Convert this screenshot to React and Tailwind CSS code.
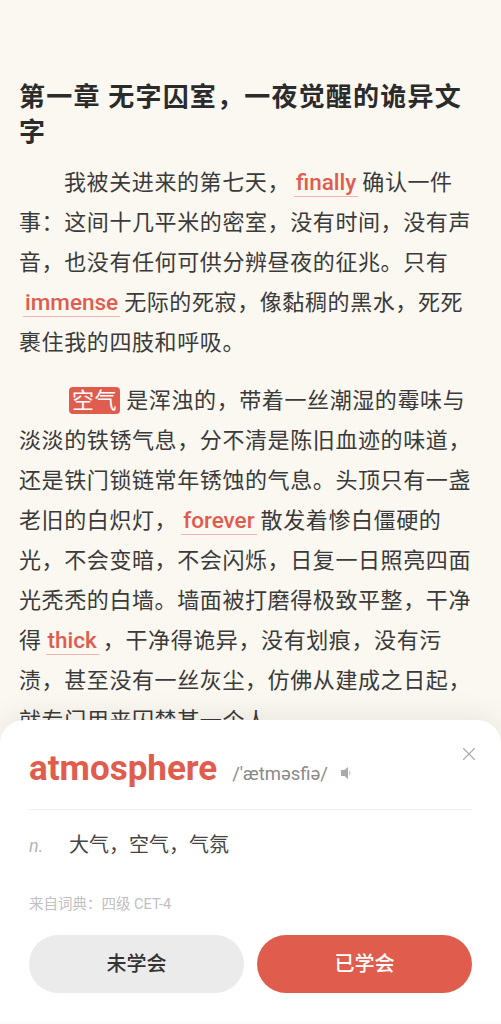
import { X } from 'lucide-react';

const font = 'font-["Roboto","Noto_Sans_CJK_SC",sans-serif]';

function Word({ children }) {
  return (
    <span className="mx-[4px] px-[2px] pb-[1px] text-[22.5px] leading-none text-[#e05d4e] font-medium tracking-normal border-b border-[#f0b5ad]">
      {children}
    </span>
  );
}

export default function App() {
  return (
    <div className={`${font} relative h-[1024px] w-full overflow-hidden bg-[#fbf8f2]`}>
      <div className="pl-[19px] pr-5 pt-[80px]">
        <h1 className="text-[26px] leading-[35px] font-bold tracking-[1.2px] text-[#2b2b2b]">
          第一章 无字囚室，一夜觉醒的诡异文字
        </h1>
        <p className="mt-[13px] text-[22px] leading-[40px] tracking-[0.6px] indent-[45px] text-[#3a3a3a]">
          我被关进来的第七天，<Word>finally</Word>确认一件事：这间十几平米的密室，没有时间，没有声音，也没有任何可供分辨昼夜的征兆。只有<Word>immense</Word>无际的死寂，像黏稠的黑水，死死裹住我的四肢和呼吸。
        </p>
        <p className="mt-[18px] text-[22px] leading-[40px] tracking-[0.6px] indent-[45px] text-[#3a3a3a]">
          <span className="ml-[5px] rounded-[4px] bg-[#e05d4e] px-[3px] py-[1px] text-white">空气</span> 是浑浊的，带着一丝潮湿的霉味与淡淡的铁锈气息，分不清是陈旧血迹的味道，还是铁门锁链常年锈蚀的气息。头顶只有一盏老旧的白炽灯，<Word>forever</Word>散发着惨白僵硬的光，不会变暗，不会闪烁，日复一日照亮四面光秃秃的白墙。墙面被打磨得极致平整，干净得<Word>thick</Word>，干净得诡异，没有划痕，没有污渍，甚至没有一丝灰尘，仿佛从建成之日起，就专门用来囚禁某一个人
        </p>
      </div>

      <div className="absolute inset-x-0 bottom-0 h-[304px] rounded-t-[24px] border-b-[3px] border-[#fbfbfb] bg-white px-[29px] shadow-[0_-4px_30px_rgba(0,0,0,0.08)]">
        <button className="absolute right-[21px] top-[23px] text-[#aaaaaa]">
          <X size={22} strokeWidth={1.2} />
        </button>
        <div className="flex h-[90px] items-baseline border-b border-[#f2f0ee] pt-[31px]">
          <span className="text-[35px] font-bold leading-none text-[#e05d4e]">atmosphere</span>
          <span className="ml-[15px] text-[18.5px] text-[#8a8a8a]">/'ætməsfiə/</span>
          <svg viewBox="0 0 11 14" className="mb-[-2px] ml-[13px] h-[14px] w-[11px]">
            <path d="M0 4h3.5L7 1v12l-3.5-3H0z" fill="#aaaaaa" />
            <path d="M8 4.2a3.4 3.4 0 0 1 0 5.6z" fill="#cccccc" />
          </svg>
        </div>
        <div className="mt-[20px] flex items-center">
          <span className="w-10 text-[18px] italic text-[#b5b5b5]">n.</span>
          <span className="text-[20px] text-[#444444]">大气，空气，气氛</span>
        </div>
        <div className="mt-[34px] text-[14.5px] text-[#c0c0c0]">来自词典：四级 CET-4</div>
        <div className="mt-[19px] flex gap-[13px]">
          <button className="h-[58px] flex-1 rounded-full bg-[#ecebec] text-[20px] font-medium text-[#333333]">未学会</button>
          <button className="h-[58px] flex-1 rounded-full bg-[#e05d4e] text-[20px] font-medium text-white">已学会</button>
        </div>
      </div>
    </div>
  );
}
